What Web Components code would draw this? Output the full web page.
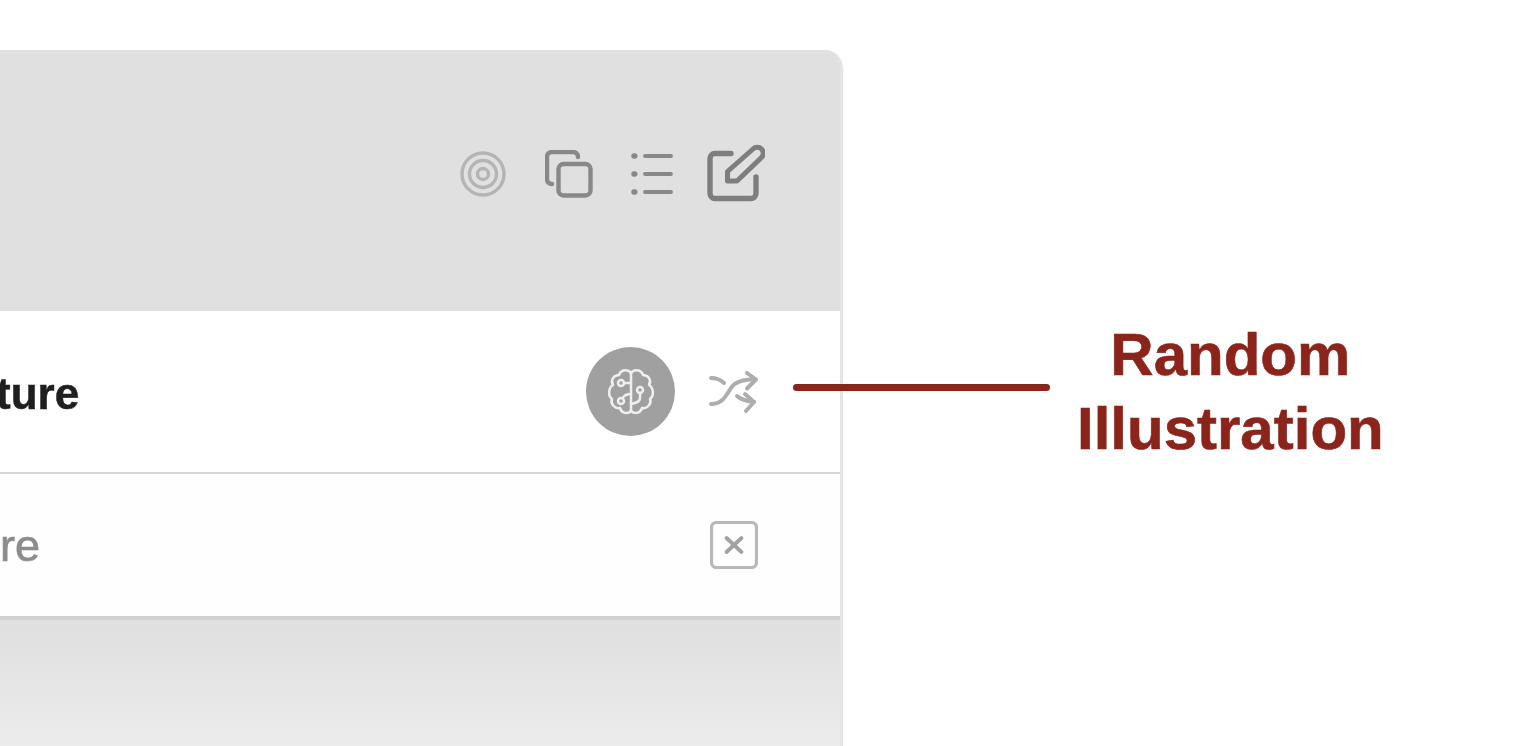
<!DOCTYPE html>
<html>
<head>
<meta charset="utf-8">
<style>
  html, body { margin: 0; height: 100%; background: #fff; overflow: hidden; font-family: "Liberation Sans", Arial, sans-serif; }
  body { position: relative; }
</style>
</head>
<body>
<app-panel>
  <panel-header>
    <svg slot="icons" style="--c:#b4b4b4;margin-top:2px" viewBox="0 0 46 46" width="46" height="46" fill="none" stroke="currentColor" stroke-width="3.400">
      <circle cx="23" cy="23" r="21"/><circle cx="23" cy="23" r="13.500"/><circle cx="23" cy="23" r="5.500"/>
    </svg>
    <svg slot="icons" style="--c:#888;margin-left:39px;margin-top:1px" viewBox="0 0 48 48" width="48" height="48" fill="none" stroke="currentColor" stroke-width="4.400" stroke-linecap="round" stroke-linejoin="round">
      <rect x="13.500" y="14" width="32" height="31.500" rx="5"/>
      <path d="M7 34c-3 0-5-2-5-5V7c0-3 2-5 5-5h21c3 0 5 2 5 5"/>
    </svg>
    <svg slot="icons" style="--c:#888;margin-left:38px;margin-top:1px" viewBox="0 0 43 42" width="43" height="42" fill="none" stroke="currentColor" stroke-width="3.800" stroke-linecap="round">
      <path d="M14 3h26M14 21h26M14 39h26"/>
      <path d="M3 3h.8M3 21h.8M3 39h.8" stroke-width="5.400"/>
    </svg>
    <svg slot="icons" style="--c:#7e7e7e;margin-left:33px" viewBox="0 0 58 58" width="58" height="58" fill="none" stroke="currentColor" stroke-width="5.400" stroke-linecap="round" stroke-linejoin="round">
      <path d="M24 9.500H8a5 5 0 0 0-5 5v35a5 5 0 0 0 5 5h36a5 5 0 0 0 5-5V33"/>
      <path d="M46 5a6 6 0 0 1 8.500 8.500L30 37H20.500V27.500z" stroke-width="5"/>
    </svg>
  </panel-header>
  <panel-row height="163" border="#d6d6d6" inset="81">
    <row-label strong>ture</row-label>
    <brain-badge slot="actions"></brain-badge>
    <svg slot="actions" style="--c:#adadad" viewBox="0 0 50 42" width="50" height="42" fill="none" stroke="currentColor" stroke-width="3.900" stroke-linecap="round" stroke-linejoin="round">
      <path d="M2 7C8 7 12 9 15 12"/>
      <path d="M2 33C14 33 17 24 22 17 26 11 32 9 46 8"/>
      <path d="M38 2l9 6.500-9 9"/>
      <path d="M28 25C32 29 38 30 45 31"/>
      <path d="M36 23l9 8-8 9"/>
    </svg>
  </panel-row>
  <panel-row height="142" border="#d0d0d0" inset="82" thick bg="#fefefe">
    <row-label>re</row-label>
    <svg slot="actions" style="--c:#b8b8b8" viewBox="0 0 48 48" width="48" height="48" fill="none" stroke="currentColor" stroke-width="3.200" stroke-linecap="round" stroke-linejoin="round">
      <rect x="1.500" y="1.500" width="45" height="45" rx="5"/>
      <path d="M16.500 17l15 14M31.500 17l-15 14" stroke-width="3.800" stroke="#a2a2a2"/>
    </svg>
  </panel-row>
</app-panel>
<call-out>Random<br>Illustration</call-out>

<script>
class AppPanel extends HTMLElement {
  constructor() {
    super();
    this.attachShadow({ mode: 'open' });
    this.shadowRoot.innerHTML = `
      <style>
        :host {
          display: flex;
          flex-direction: column;
          box-sizing: border-box;
          width: 843px;
          height: 696px;
          margin-top: 50px;
          border-right: 3px solid #e4e4e4;
          border-top-right-radius: 18px;
          background: linear-gradient(#e0e0e0 0, #e0e0e0 580px, #ececec 100%);
          overflow: hidden;
        }
      </style>
      <slot></slot>
    `;
  }
}

class PanelHeader extends HTMLElement {
  constructor() {
    super();
    this.attachShadow({ mode: 'open' });
    this.shadowRoot.innerHTML = `
      <style>
        :host {
          display: flex;
          align-items: center;
          justify-content: flex-end;
          box-sizing: border-box;
          height: 261px;
          padding: 0 75px 15px 0;
          flex: none;
        }
        ::slotted(svg) { color: var(--c); filter: blur(.7px); flex: none; }
      </style>
      <slot name="icons"></slot>
    `;
  }
}

class PanelRow extends HTMLElement {
  constructor() {
    super();
    this.attachShadow({ mode: 'open' });
    const border = this.getAttribute('border');
    const bw = this.hasAttribute('thick') ? 4 : 2;
    this.shadowRoot.innerHTML = `
      <style>
        :host {
          display: flex;
          align-items: center;
          justify-content: space-between;
          box-sizing: border-box;
          height: ${Number(this.getAttribute('height')) + (bw === 4 ? 4 : 0)}px;
          padding-right: ${this.getAttribute('inset')}px;
          background: ${this.getAttribute('bg') || '#fff'};
          border-bottom: ${bw}px solid ${border};
          flex: none;
        }
        .actions { display: flex; align-items: center; gap: 34px; }
        ::slotted(svg) { color: var(--c); filter: blur(.7px); flex: none; }
      </style>
      <slot></slot>
      <div class="actions"><slot name="actions"></slot></div>
    `;
  }
}

class RowLabel extends HTMLElement {
  constructor() {
    super();
    this.attachShadow({ mode: 'open' });
    const strong = this.hasAttribute('strong');
    this.shadowRoot.innerHTML = `
      <style>
        :host {
          display: block;
          margin-left: ${strong ? -4 : 0}px;
          margin-top: ${strong ? 4 : 2}px;
          font-size: ${strong ? 44 : 45}px;
          line-height: 50px;
          font-weight: ${strong ? 700 : 400};
          color: ${strong ? '#1f1f1f' : '#8c8c8c'};
          -webkit-text-stroke: ${strong ? '.5px' : '.7px'} currentColor;
          filter: blur(.7px);
        }
      </style>
      <slot></slot>
    `;
  }
}

class BrainBadge extends HTMLElement {
  constructor() {
    super();
    this.attachShadow({ mode: 'open' });
    this.shadowRoot.innerHTML = `
      <style>
        :host {
          display: flex;
          align-items: center;
          justify-content: center;
          width: 89px;
          height: 89px;
          border-radius: 50%;
          background: #a0a0a0;
          filter: blur(.6px);
        }
      </style>
      <svg viewBox="0 0 48 48" width="48" height="50" fill="none" stroke="#efefef" stroke-width="2.500" stroke-linecap="round" stroke-linejoin="round">
        <path d="M24 5C21 1 14 1 12 7 7 7 3 12 6 17 1 20 1 28 5 31 3 36 8 41 13 40 15 46 21 46 24 43"/>
        <path d="M24 5C27 1 34 1 36 7 41 7 45 12 42 17 47 20 47 28 43 31 45 36 40 41 35 40 33 46 27 46 24 43"/>
        <path d="M24 5V43"/>
        <circle cx="14" cy="15" r="3"/><path d="M17 15h7"/>
        <circle cx="14" cy="33" r="3"/><path d="M15.500 30.500C17 27 20 26 24 26"/>
        <circle cx="33" cy="22" r="3"/><path d="M33 25v5c0 4-4 5-9 6"/>
      </svg>
    `;
  }
}

class CallOut extends HTMLElement {
  constructor() {
    super();
    this.attachShadow({ mode: 'open' });
    this.shadowRoot.innerHTML = `
      <style>
        :host {
          position: absolute;
          left: 793px;
          top: 318px;
          display: flex;
          align-items: center;
          gap: 27px;
          color: #8b241b;
        }
        .line { width: 257px; height: 7px; border-radius: 4px; background: currentColor; margin-top: -9px; filter: blur(.5px); }
        .text {
          font-size: 60px;
          line-height: 74px;
          font-weight: 700;
          text-align: center;
          white-space: nowrap;
          -webkit-text-stroke: .6px currentColor;
          filter: blur(.7px);
        }
      </style>
      <div class="line"></div>
      <div class="text"><slot></slot></div>
    `;
  }
}

customElements.define('app-panel', AppPanel);
customElements.define('panel-header', PanelHeader);
customElements.define('panel-row', PanelRow);
customElements.define('row-label', RowLabel);
customElements.define('brain-badge', BrainBadge);
customElements.define('call-out', CallOut);
</script>
</body>
</html>
